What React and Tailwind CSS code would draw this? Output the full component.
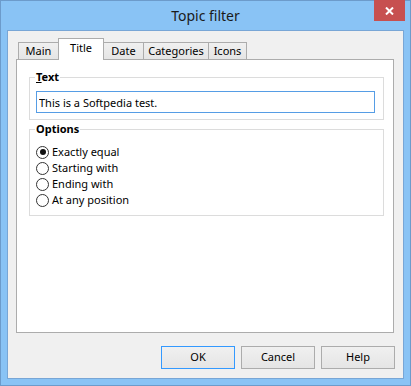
import { clsx } from 'clsx';

const tabs = [
  { label: 'Main', w: 'w-[41px]' },
  { label: 'Title', w: 'w-[46px]', active: true },
  { label: 'Date', w: 'w-[41px]' },
  { label: 'Categories', w: 'w-[66px]' },
  { label: 'Icons', w: 'w-[39px]' },
];

const options = ['Exactly equal', 'Starting with', 'Ending with', 'At any position'];

function Radio({ checked, label }) {
  return (
    <label className="flex items-center h-[16px] gap-[3px]">
      <span className="w-[13px] h-[13px] rounded-full border border-[#333] bg-white flex items-center justify-center">
        {checked && <span className="w-[6px] h-[6px] rounded-full bg-[#111]" />}
      </span>
      <span>{label}</span>
    </label>
  );
}

function Button({ children, primary }) {
  return (
    <button
      className={clsx(
        'w-[74px] h-[23px] border bg-gradient-to-b from-[#f0f0f0] to-[#e5e5e5] text-black',
        primary ? 'border-[#3399ff]' : 'border-[#acacac]'
      )}
    >
      {children}
    </button>
  );
}

export default function App() {
  return (
    <div className="w-[411px] h-[386px] bg-[#89c3f5] border border-[#6c9bcb] flex flex-col font-['Noto_Sans',sans-serif] text-[11px] text-black">
      {/* title bar */}
      <div className="relative h-[29px] flex items-center justify-center">
        <span className="text-[14px] text-[#1a1a1a] -mt-[1px]">Topic filter</span>
        <button className="absolute -top-[1px] right-[5px] w-[31px] h-[21px] bg-[#c75050] flex items-center justify-center">
          <svg width="9" height="8" viewBox="0 0 9 8">
            <path d="M1 0.5 L8 7.5 M8 0.5 L1 7.5" stroke="#fff" strokeWidth="2" />
          </svg>
        </button>
      </div>

      {/* client */}
      <div className="mx-[6px] h-[349px] border border-[#78a6d6] bg-[#f0f0f0] flex flex-col pt-[7px]">
        <div className="flex items-end h-[21px] ml-[10px]">
          {tabs.map((t, i) => (
            <div
              key={t.label}
              className={clsx(
                'flex justify-center border-l border-t border-r border-[#acacac]',
                t.w,
                i > 0 && '-ml-[1px]',
                t.active
                  ? 'relative z-10 h-[22px] -mb-[1px] bg-white pt-[1px]'
                  : 'h-[17px] bg-gradient-to-b from-[#f0f0f0] to-[#e5e5e5] items-center'
              )}
            >
              {t.label}
            </div>
          ))}
        </div>

        <div className="ml-[8px] mr-[9px] h-[274px] border border-[#acacac] bg-white pl-[12px] pr-[9px] pt-[9px]">
          <fieldset className="border border-[#dcdcdc] pl-[5px] pr-[8px] pb-[6px]">
            <legend className="px-[1px] font-bold leading-[16px]">
              <span className="underline">T</span>ext
            </legend>
            <input
              readOnly
              value="This is a Softpedia test."
              className="mt-[6px] ml-[1px] w-[339px] h-[22px] border border-[#569de5] px-[2px] outline-none text-[11px]"
            />
          </fieldset>

          <fieldset className="mt-[1px] border border-[#dcdcdc] pl-[5px] pr-[8px] pb-[7px]">
            <legend className="px-[1px] font-bold leading-[16px]">Options</legend>
            <div className="mt-[7px] ml-[1px] flex flex-col">
              {options.map((o, i) => (
                <Radio key={o} label={o} checked={i === 0} />
              ))}
            </div>
          </fieldset>
        </div>

        <div className="flex justify-end gap-[6px] pr-[8px] mt-[13px]">
          <Button primary>OK</Button>
          <Button>Cancel</Button>
          <Button>Help</Button>
        </div>
      </div>
    </div>
  );
}
